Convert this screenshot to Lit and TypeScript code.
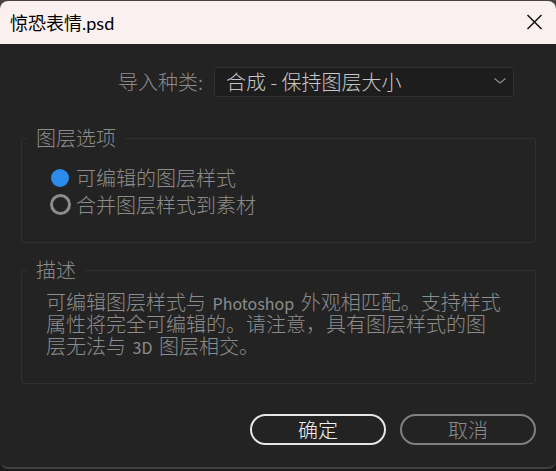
import { LitElement, html, css } from "lit";
import { customElement, state } from "lit/decorators.js";

@customElement("app-root")
export class AppRoot extends LitElement {
  static styles = css`
    :host {
      display: block;
      min-height: 100vh;
      box-sizing: border-box;
      padding-top: 1px;
      background: linear-gradient(#484346 50%, #1c191b 50%);
      color: #8c8c8c;
      font: 300 20px/24px "Noto Sans CJK SC", sans-serif;
    }
    .dialog {
      box-sizing: border-box;
      overflow: hidden;
      border-bottom: 2px solid #404040;
      border-radius: 8px;
      background: #232323;
    }
    .titlebar {
      display: flex;
      align-items: center;
      justify-content: space-between;
      height: 43px;
      padding: 0 13px 0 10px;
      background: #f9f0ef;
      color: #000;
    }
    .title {
      margin: 0;
      font: 400 18px/24px Lato, "Noto Sans CJK SC", sans-serif;
    }
    .close {
      display: flex;
      padding: 0;
      border: 0;
      background: none;
      color: #111;
    }
    .body {
      padding: 23px 20px 22px 21px;
    }
    .kind {
      display: flex;
      align-items: center;
      justify-content: flex-end;
      gap: 11px;
      padding-right: 22px;
    }
    .picker {
      display: grid;
      position: relative;
      flex: 0 1 300px;
    }
    .select {
      appearance: none;
      box-sizing: border-box;
      width: 100%;
      height: 30px;
      padding: 0 32px 0 11px;
      border: 1px solid #303030;
      border-radius: 3px;
      background: #1d1d1d;
      color: #c8c8c8;
      font: inherit;
    }
    .chevron {
      position: absolute;
      right: 7px;
      top: 10px;
      pointer-events: none;
    }
    .group {
      min-width: 0;
      margin: 0;
      border: 1px solid #303030;
      border-radius: 3px;
    }
    .options {
      margin-top: 29px;
      padding: 14px 5px 24px;
    }
    .about {
      margin-top: 15px;
      padding: 10px 5px 25px;
    }
    .legend {
      padding: 0 9px;
    }
    .option {
      display: flex;
      align-items: center;
      gap: 5px;
      height: 27px;
      padding-left: 23px;
    }
    .radio {
      appearance: none;
      box-sizing: border-box;
      width: 21px;
      height: 21px;
      margin: 0;
      border: 3px solid #8c8c8c;
      border-radius: 50%;
    }
    .radio:checked {
      width: 18px;
      height: 18px;
      margin: 0 2px 0 1px;
      border: 0;
      background: #2d8ceb;
    }
    .text {
      margin: 0;
      padding-left: 19px;
      font-family: "Liberation Sans", "Noto Sans CJK SC", sans-serif;
      line-height: 22px;
    }
    .latin {
      padding: 0 1px;
      font: 400 16px/0 "Noto Sans CJK SC", sans-serif;
    }
    .actions {
      display: flex;
      justify-content: flex-end;
      gap: 14px;
      margin-top: 30px;
    }
    .button {
      box-sizing: border-box;
      width: 136px;
      height: 31px;
      padding: 0;
      border: 2px solid #808080;
      border-radius: 16px;
      background: none;
      color: #8c8c8c;
      font: inherit;
    }
    .primary {
      border-color: #e6e6e6;
      color: #f0f0f0;
    }
  `;

  @state() private layerStyle = "editable";

  private renderOption(value: string, label: string) {
    return html`<label class="option">
      <input
        class="radio"
        type="radio"
        name="layer-style"
        .value=${value}
        .checked=${this.layerStyle === value}
        @change=${() => (this.layerStyle = value)}
      />
      <span>${label}</span>
    </label>`;
  }

  render() {
    return html`<main class="dialog">
      <header class="titlebar">
        <h1 class="title">惊恐表情.psd</h1>
        <button class="close" type="button" aria-label="关闭">
          <svg width="17" height="17" viewBox="0 0 17 17" fill="none" stroke="currentColor" stroke-width="1.5">
            <path d="M1.5 1l14 14M15.5 1l-14 14" />
          </svg>
        </button>
      </header>
      <form class="body" @submit=${(e: Event) => e.preventDefault()}>
        <div class="kind">
          <label for="kind">导入种类:</label>
          <div class="picker">
            <select class="select" id="kind">
              <option>合成 - 保持图层大小</option>
            </select>
            <svg class="chevron" width="14" height="9" viewBox="0 0 14 9" fill="none" stroke="#8c8c8c" stroke-width="1.2">
              <path d="M1.5 1.5L7 6l5.5-4.5" />
            </svg>
          </div>
        </div>
        <fieldset class="group options">
          <legend class="legend">图层选项</legend>
          ${this.renderOption("editable", "可编辑的图层样式")}
          ${this.renderOption("merge", "合并图层样式到素材")}
        </fieldset>
        <fieldset class="group about">
          <legend class="legend">描述</legend>
          <p class="text">
            可编辑图层样式与 <span class="latin">Photoshop</span> 外观相匹配。支持样式<br />属性将完全可编辑的。请注意，具有图层样式的图<br />层无法与 <span class="latin">3D</span> 图层相交。
          </p>
        </fieldset>
        <div class="actions">
          <button class="button primary" type="submit">确定</button>
          <button class="button" type="button">取消</button>
        </div>
      </form>
    </main>`;
  }
}
